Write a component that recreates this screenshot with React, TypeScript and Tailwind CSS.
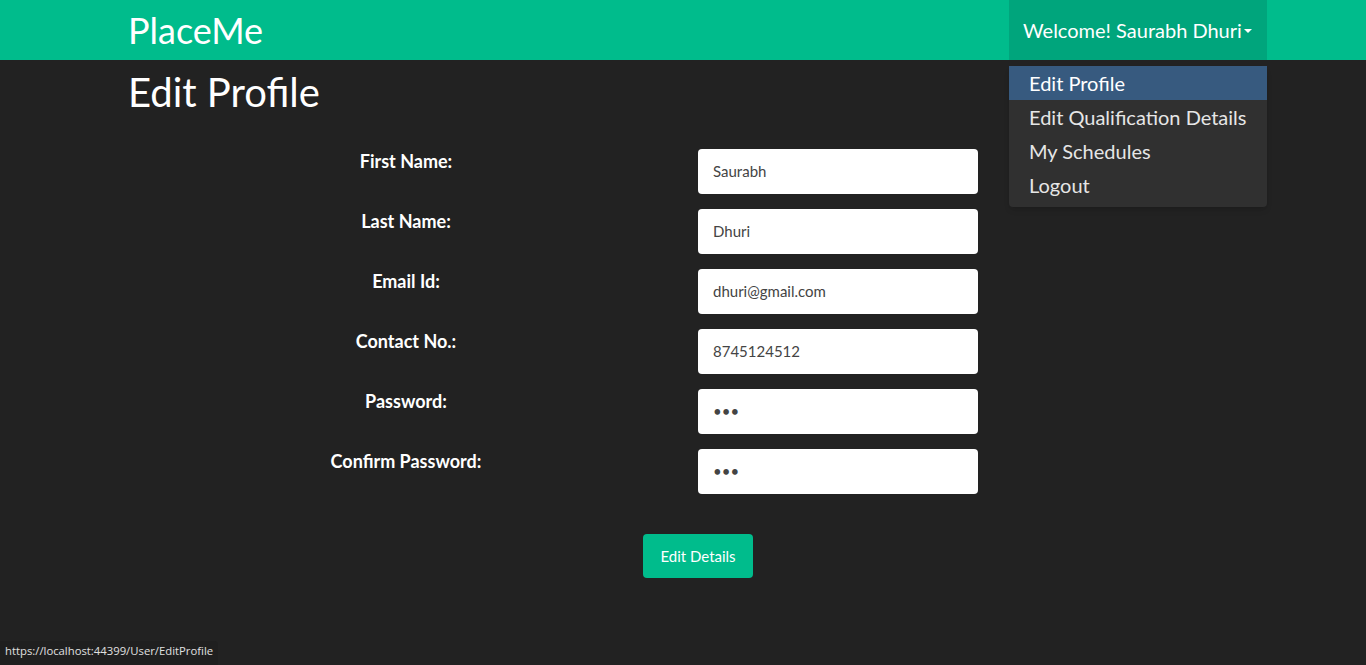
const font = { fontFamily: "Lato, 'Liberation Sans', sans-serif" };

const fields = [
  { label: "First Name:", value: "Saurabh", type: "text" },
  { label: "Last Name:", value: "Dhuri", type: "text" },
  { label: "Email Id:", value: "dhuri@gmail.com", type: "text" },
  { label: "Contact No.:", value: "8745124512", type: "text" },
  { label: "Password:", value: "abc", type: "password" },
  { label: "Confirm Password:", value: "abc", type: "password" },
];

const menu = ["Edit Profile", "Edit Qualification Details", "My Schedules", "Logout"];

function Navbar() {
  return (
    <nav className="relative flex h-[60px] items-center bg-[#00bc8c] pl-[128px] pr-[99px]">
      <span className="text-[36px] leading-none text-white">PlaceMe</span>
      <div className="relative ml-auto h-full">
        <button className="flex h-full w-[258px] items-center bg-[#00a57c] pl-[14px] text-[20px] text-white">
          Welcome! Saurabh Dhuri
          <svg width="8" height="5" viewBox="0 0 8 5" className="ml-[2px] mt-[2px]">
            <path d="M0 0h8L4 4z" fill="#fff" />
          </svg>
        </button>
        <div className="absolute left-0 top-[66px] z-10 w-[258px] rounded bg-[#303030] pb-[5px] shadow-md">
          {menu.map((m, i) => (
            <div
              key={m}
              className={`flex h-[34px] items-center px-[20px] text-[20px] ${
                i === 0 ? "bg-[#375a7f] text-white" : "text-[#e6e6e6]"
              }`}
            >
              {m}
            </div>
          ))}
        </div>
      </div>
    </nav>
  );
}

export default function App() {
  return (
    <div className="relative min-h-[665px] bg-[#222222] text-white" style={font}>
      <Navbar />
      <main className="px-[128px]">
        <h1 className="mt-[8px] text-[40px] leading-[48px] text-white">Edit Profile</h1>
        <form className="mt-[33px] flex flex-col gap-[15px]">
          {fields.map((f) => (
            <div key={f.label} className="flex">
              <label className="ml-[128px] w-[300px] pt-[1px] text-center text-[18px] font-bold leading-[22px]">
                {f.label}
              </label>
              <input
                readOnly
                type={f.type}
                value={f.value}
                className="ml-[142px] h-[45px] w-[280px] rounded bg-white px-[15px] pb-[1px] text-[15px] text-[#444] outline-none"
              />
            </div>
          ))}
          <div className="mt-[25px] flex">
            <button
              type="button"
              className="ml-[515px] h-[44px] w-[110px] rounded bg-[#00bc8c] text-[15px] text-white"
            >
              Edit Details
            </button>
          </div>
        </form>
      </main>
      <div
        className="absolute bottom-0 left-0 flex h-[24px] items-center rounded-tr-sm bg-[#1f1f1f] px-[5px] pb-[3px] text-[11.3px] text-[#e0e0e0]"
        style={{ fontFamily: "'Segoe UI', 'Open Sans', sans-serif" }}
      >
        https://localhost:44399/User/EditProfile
      </div>
    </div>
  );
}
